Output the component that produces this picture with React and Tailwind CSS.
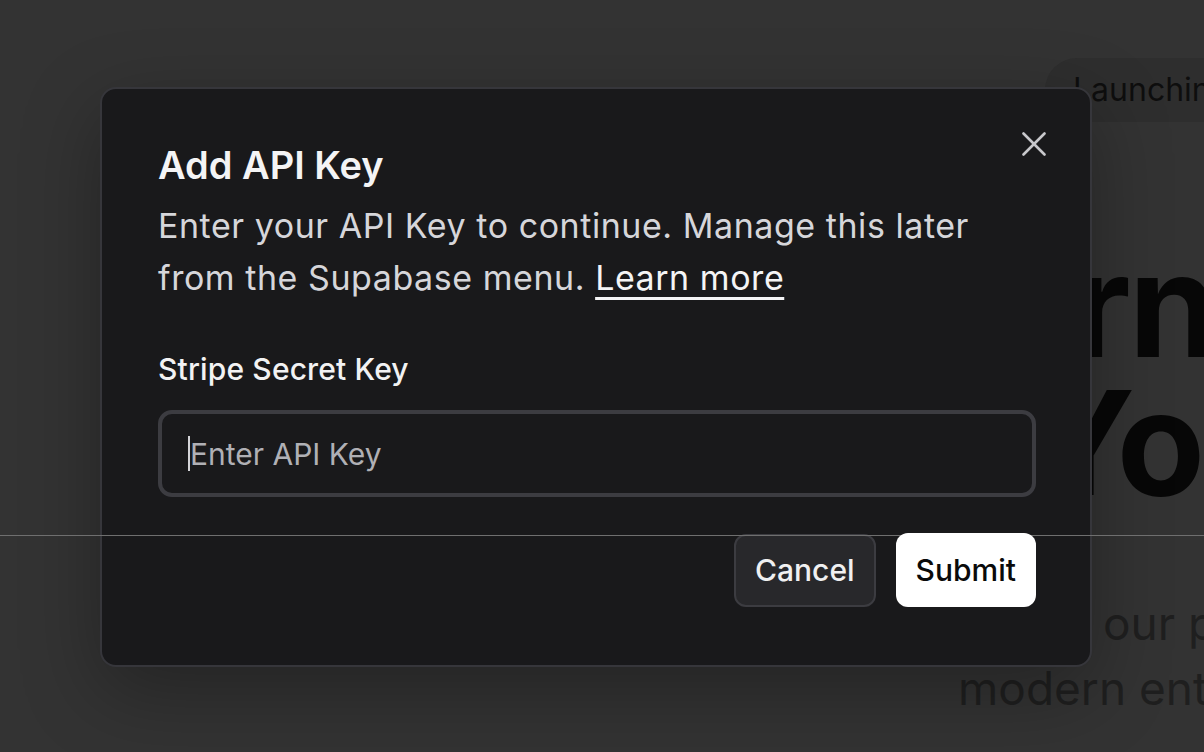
export default function App() {
  return (
    <div className="relative w-[1204px] h-[752px] overflow-hidden bg-[#333333] font-['Inter',sans-serif]">
      {/* Background page (dimmed) */}
      <div className="flex flex-col items-start">
        <div className="ml-[1045px] mt-[58px] h-[64px] w-max whitespace-nowrap rounded-full bg-[#2e2e2e] pl-[28px] pr-[28px] text-[32px] leading-[64px] text-[#0e0e0e]">
          Launching soon
        </div>
        <div className="mt-[114px] flex flex-col text-[144px] font-bold leading-[138px] tracking-[-0.02em] text-[#070707] whitespace-nowrap">
          <span className="ml-[1072px]">rn</span>
          <span className="ml-[1030px]">You</span>
        </div>
        <div className="mt-[79px] flex flex-col text-[46px] leading-[65px] text-[#1f1f1f] whitespace-nowrap">
          <span className="ml-[1103px]">our platform</span>
          <span className="ml-[958px]">modern enterprise</span>
        </div>
      </div>

      {/* Dialog */}
      <div className="absolute left-[100px] top-[87px] w-[992px] rounded-[16px] border-2 border-[#36363b] bg-[#19191b] pl-[56px] pr-[54px] pt-[54px] pb-[58px] shadow-[0_24px_80px_rgba(0,0,0,0.3)]">
        <button className="absolute right-[43px] top-[42px] flex h-[26px] w-[26px] items-center justify-center text-[#c8c8cc]">
          <svg width="24" height="24" viewBox="0 0 24 24" fill="none" stroke="currentColor" strokeWidth="2.6" strokeLinecap="round">
            <path d="M1.5 1.5 22.5 22.5" />
            <path d="M22.5 1.5 1.5 22.5" />
          </svg>
        </button>
        <h2 className="text-[38px] font-semibold leading-[44px] tracking-[0px] text-[#f4f4f5]">Add API Key</h2>
        <p className="mt-[13px] text-[34px] leading-[52px] tracking-[0.016em] text-[#d6d6da]">
          Enter your API Key to continue. Manage this later
          <br />
          from the Supabase menu.{" "}
          <a className="text-[#f4f4f5] underline decoration-[3px] underline-offset-[7px]">Learn more</a>
        </p>
        <div className="mt-[47px] text-[30px] font-medium leading-[36px] tracking-[0.005em] text-[#f2f2f3]">Stripe Secret Key</div>
        <div className="mt-[23px] flex h-[87px] w-full items-center rounded-[14px] border-4 border-[#3c3c41] pl-[26px]">
          <span className="h-[35px] w-[2px] bg-[#d4d4d8]" />
          <span className="text-[30px] leading-[36px] text-[#b0b0b5]">Enter API Key</span>
        </div>
        <div className="mt-[37px] flex justify-end gap-[20px]">
          <button className="h-[73px] rounded-[12px] border-2 border-[#3c3c41] bg-[#28282b] px-[19px] text-[30px] font-medium text-[#f0f0f1]">
            Cancel
          </button>
          <button className="relative z-20 -mt-[1px] h-[74px] rounded-[12px] bg-white px-[20px] text-[30px] font-medium text-[#0a0a0a]">
            Submit
          </button>
        </div>
      </div>

      {/* thin horizontal line artifact */}
      <div className="absolute left-0 right-0 top-[535px] z-10 h-px bg-[#6f6f6f]" />
    </div>
  );
}
